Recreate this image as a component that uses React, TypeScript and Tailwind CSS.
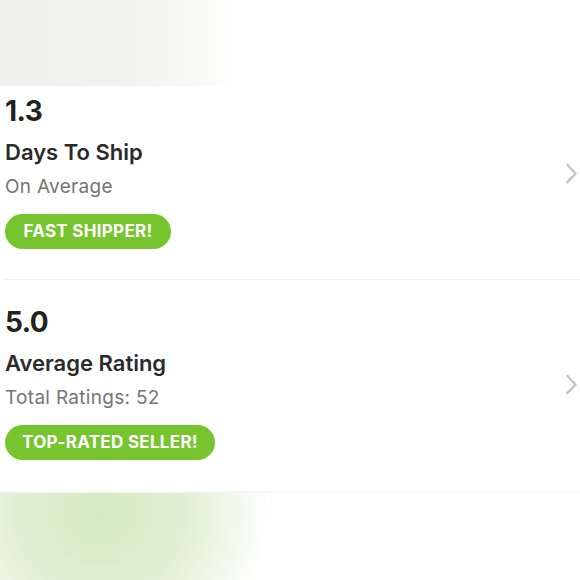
import React from "react";

function Chevron() {
  return (
    <svg width="13" height="21" viewBox="0 0 13 21" fill="none" className="shrink-0">
      <path d="M2.5 2 L10.5 10.5 L2.5 19" stroke="#c4c4c4" strokeWidth="2.4" strokeLinecap="square" />
    </svg>
  );
}

function Stat({ value, title, sub, badge, badgeW, top }: { value: string; title: string; sub: string; badge: string; badgeW: string; top: string }) {
  return (
    <div className={`flex items-center justify-between pl-[5px] pr-[2px] ${top}`}>
      <div className="flex flex-col">
        <div className="text-[28px] font-bold leading-[30px] text-[#222222] tracking-[-0.5px]">{value}</div>
        <div className="text-[22px] font-semibold leading-[28px] text-[#2a2a2a] mt-[12px]">{title}</div>
        <div className="text-[19px] leading-[24px] text-[#757575] mt-[9px] tracking-[0.3px]">{sub}</div>
        <div className={`mt-[15px] h-[35px] rounded-full bg-[#76c42e] text-white text-[17px] font-bold tracking-[0.3px] flex items-center justify-center ${badgeW}`}>
          {badge}
        </div>
      </div>
      <div className="mt-[2px]">
        <Chevron />
      </div>
    </div>
  );
}

export default function App() {
  return (
    <div className="w-[580px] h-[580px] bg-white overflow-hidden flex flex-col" style={{ fontFamily: "Inter, 'Noto Sans', sans-serif" }}>
      <div className="h-[86px] shrink-0 bg-[linear-gradient(90deg,#eff0ec_0%,#f2f3ef_22%,#f8f9f6_32%,#ffffff_42%)]" />
      <Stat top="mt-[10px]" value="1.3" title="Days To Ship" sub="On Average" badge="FAST SHIPPER!" badgeW="w-[166px]" />
      <div className="ml-[5px] mt-[30px] h-px bg-[#f0f0f0]" />
      <Stat top="mt-[27px]" value="5.0" title="Average Rating" sub="Total Ratings: 52" badge="TOP-RATED SELLER!" badgeW="w-[210px]" />
      <div className="mt-[31px] h-[2px] bg-[#f6f6f4] shrink-0" />
      <div className="flex-1 bg-[radial-gradient(ellipse_170px_160px_at_100px_20px,#d5e9c3_0%,#e0efd3_50%,#ffffff_100%)]" />
    </div>
  );
}
